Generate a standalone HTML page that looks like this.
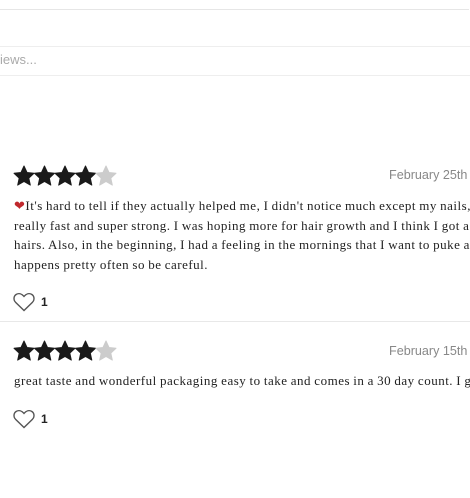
<!DOCTYPE html>
<html><head><style>
body{margin:0;width:470px;height:498px;overflow:hidden;background:#fff;position:relative;font-family:"Liberation Serif",serif}
.a{position:absolute}
.txt{font-size:13px;letter-spacing:0.5px;word-spacing:-0.5px;color:#222;line-height:19.5px;white-space:nowrap;left:14px;width:456px;overflow:hidden}
.date{font-family:"Liberation Sans",sans-serif;font-size:12.6px;color:#888}
.cnt{font-family:"Liberation Sans",sans-serif;font-size:12px;font-weight:bold;color:#222}
</style></head><body>
<div class="a" style="left:0;top:-10px;width:469px;height:18px;border:1px solid #e6e6e6;border-left:none;border-right:none"></div>
<div class="a" style="left:0;top:46px;width:470px;height:28px;border-top:1px solid #eee;border-bottom:1px solid #eee"></div>
<div class="a" style="left:0px;top:52px;font-family:'Liberation Sans',sans-serif;font-size:13px;color:#aaa">iews...</div>

<svg class="a" style="left:13px;top:165px" width="105" height="22" viewBox="0 0 105 22">
<g id="s"><path d="M11 1l3 6.5 7 .8-5.2 4.8 1.5 7L11 16.5 4.7 20.1l1.5-7L1 8.3l7-.8z" fill="#1a1a1a" stroke="#1a1a1a" stroke-width="1" stroke-linejoin="round"/></g>
<use href="#s" x="20.5"/><use href="#s" x="41"/><use href="#s" x="61.5"/>
<path transform="translate(82 0)" d="M11 1l3 6.5 7 .8-5.2 4.8 1.5 7L11 16.5 4.7 20.1l1.5-7L1 8.3l7-.8z" fill="#ccc" stroke="#ccc" stroke-width="1" stroke-linejoin="round"/>
</svg>
<div class="a date" style="left:389px;top:168px">February 25th</div>
<div class="a txt" style="top:196px"><span style="color:#c0282d">&#10084;</span>It's hard to tell if they actually helped me, I didn't notice much except my nails, were<br>really fast and super strong. I was hoping more for hair growth and I think I got a few<br>hairs. Also, in the beginning, I had a feeling in the mornings that I want to puke and it<br>happens pretty often so be careful.</div>
<svg class="a" style="left:13px;top:292px" width="22" height="20" viewBox="0 0 22 20"><path d="M11 18.5L2.5 10.2C.2 7.8.6 4 3.3 2.4 5.6 1 8.5 1.6 11 4.4 13.5 1.6 16.4 1 18.7 2.4c2.7 1.6 3.1 5.4.8 7.8z" fill="none" stroke="#555" stroke-width="1.4"/></svg>
<div class="a cnt" style="left:41px;top:295px">1</div>
<div class="a" style="left:0;top:321px;width:470px;height:1px;background:#e8e8e8"></div>

<svg class="a" style="left:13px;top:340px" width="105" height="22" viewBox="0 0 105 22">
<use href="#s"/><use href="#s" x="20.5"/><use href="#s" x="41"/><use href="#s" x="61.5"/>
<path transform="translate(82 0)" d="M11 1l3 6.5 7 .8-5.2 4.8 1.5 7L11 16.5 4.7 20.1l1.5-7L1 8.3l7-.8z" fill="#ccc" stroke="#ccc" stroke-width="1" stroke-linejoin="round"/>
</svg>
<div class="a date" style="left:389px;top:344px">February 15th</div>
<div class="a txt" style="top:371px">great taste and wonderful packaging easy to take and comes in a 30 day count. I give it</div>
<svg class="a" style="left:13px;top:409px" width="22" height="20" viewBox="0 0 22 20"><path d="M11 18.5L2.5 10.2C.2 7.8.6 4 3.3 2.4 5.6 1 8.5 1.6 11 4.4 13.5 1.6 16.4 1 18.7 2.4c2.7 1.6 3.1 5.4.8 7.8z" fill="none" stroke="#555" stroke-width="1.4"/></svg>
<div class="a cnt" style="left:41px;top:412px">1</div>
</body></html>
